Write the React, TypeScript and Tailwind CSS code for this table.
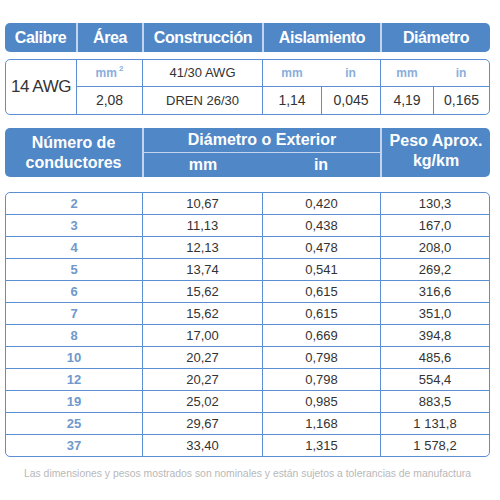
import * as React from "react"

const rows = [
  ["2", "10,67", "0,420", "130,3"],
  ["3", "11,13", "0,438", "167,0"],
  ["4", "12,13", "0,478", "208,0"],
  ["5", "13,74", "0,541", "269,2"],
  ["6", "15,62", "0,615", "316,6"],
  ["7", "15,62", "0,615", "351,0"],
  ["8", "17,00", "0,669", "394,8"],
  ["10", "20,27", "0,798", "485,6"],
  ["12", "20,27", "0,798", "554,4"],
  ["19", "25,02", "0,985", "883,5"],
  ["25", "29,67", "1,168", "1 131,8"],
  ["37", "33,40", "1,315", "1 578,2"],
]

const font = { fontFamily: '"Liberation Sans", Arial, sans-serif' }

export default function App() {
  return (
    <div className="w-[500px] h-[500px] bg-white pt-[23px] pl-[5px]" style={font}>
      <div className="w-[485px]">
        {/* gauge header */}
        <div className="grid grid-cols-[71px_66px_120px_118px_110px] h-[29px] rounded-[5px] bg-[#5087c7] text-white text-[16px] font-bold tracking-tight overflow-hidden">
          <div className="flex items-center justify-center">Calibre</div>
          <div className="flex items-center justify-center border-l-2 border-[#c3d5ee]">Área</div>
          <div className="flex items-center justify-center border-l-2 border-[#c3d5ee]">Construcción</div>
          <div className="flex items-center justify-center border-l-2 border-[#c3d5ee]">Aislamiento</div>
          <div className="flex items-center justify-center border-l-2 border-[#c3d5ee]">Diámetro</div>
        </div>

        {/* gauge data */}
        <div className="mt-[7px] h-[56px] rounded-[5px] border border-[#5b8ed3] grid grid-cols-[70px_66px_120px_59px_59px_53px_56px] grid-rows-[26px_28px] text-[#333]">
          <div className="row-span-2 flex items-center justify-center text-[17px] tracking-tight">14 AWG</div>
          <div className="flex items-center justify-center border-l border-[#5b8ed3] text-[12px] font-bold text-[#8aaedb]">
            mm<sup className="text-[8px] ml-[2px] -top-[4px]">2</sup>
          </div>
          <div className="flex items-center justify-center border-l border-[#5b8ed3] text-[13px]">41/30 AWG</div>
          <div className="flex items-center justify-center border-l border-[#5b8ed3] text-[12px] font-bold text-[#8aaedb]">mm</div>
          <div className="flex items-center justify-center text-[12px] font-bold text-[#8aaedb]">in</div>
          <div className="flex items-center justify-center border-l border-[#5b8ed3] text-[12px] font-bold text-[#8aaedb]">mm</div>
          <div className="flex items-center justify-center text-[12px] font-bold text-[#8aaedb]">in</div>

          <div className="flex items-center justify-center border-l border-t border-[#5b8ed3] text-[14px]">2,08</div>
          <div className="flex items-center justify-center border-l border-t border-[#5b8ed3] text-[13px]">DREN 26/30</div>
          <div className="flex items-center justify-center border-l border-t border-[#5b8ed3] text-[14px]">1,14</div>
          <div className="flex items-center justify-center border-l border-t border-[#5b8ed3] text-[14px]">0,045</div>
          <div className="flex items-center justify-center border-l border-t border-[#5b8ed3] text-[14px]">4,19</div>
          <div className="flex items-center justify-center border-l border-t border-[#5b8ed3] text-[14px]">0,165</div>
        </div>

        {/* conductors header */}
        <div className="mt-[13px] grid grid-cols-[137px_120px_118px_110px] grid-rows-[25px_24px] h-[49px] rounded-[5px] bg-[#5087c7] text-white text-[16px] font-bold leading-[20px] overflow-hidden">
          <div className="row-span-2 flex flex-col items-center justify-center">
            <span>Número de</span>
            <span>conductores</span>
          </div>
          <div className="col-span-2 flex items-center justify-center border-l-2 border-b border-[#c3d5ee]">
            Diámetro o Exterior
          </div>
          <div className="row-span-2 flex flex-col items-center justify-center border-l-2 border-[#c3d5ee] pb-[4px]">
            <span>Peso Aprox.</span>
            <span>kg/km</span>
          </div>
          <div className="flex items-center justify-center border-l-2 border-[#c3d5ee]">mm</div>
          <div className="flex items-center justify-center">in</div>
        </div>

        {/* conductors data */}
        <div className="mt-[15px] rounded-[5px] border border-[#5b8ed3] text-[13px] text-[#333]">
          {rows.map((r, i) => (
            <div
              key={r[0]}
              className={`grid grid-cols-[136px_120px_118px_109px] h-[21px] ${i > 0 ? "box-content border-t border-[#5b8ed3]" : ""}`}
            >
              <div className="flex items-center justify-center font-bold text-[#7098cc]">{r[0]}</div>
              <div className="flex items-center justify-center border-l border-[#5b8ed3]">{r[1]}</div>
              <div className="flex items-center justify-center border-l border-[#5b8ed3]">{r[2]}</div>
              <div className="flex items-center justify-center border-l border-[#5b8ed3]">{r[3]}</div>
            </div>
          ))}
        </div>

        <p className="mt-[9px] text-center text-[10.4px] text-[#b8b8b8]">
          Las dimensiones y pesos mostrados son nominales y están sujetos a tolerancias de manufactura
        </p>
      </div>
    </div>
  )
}
